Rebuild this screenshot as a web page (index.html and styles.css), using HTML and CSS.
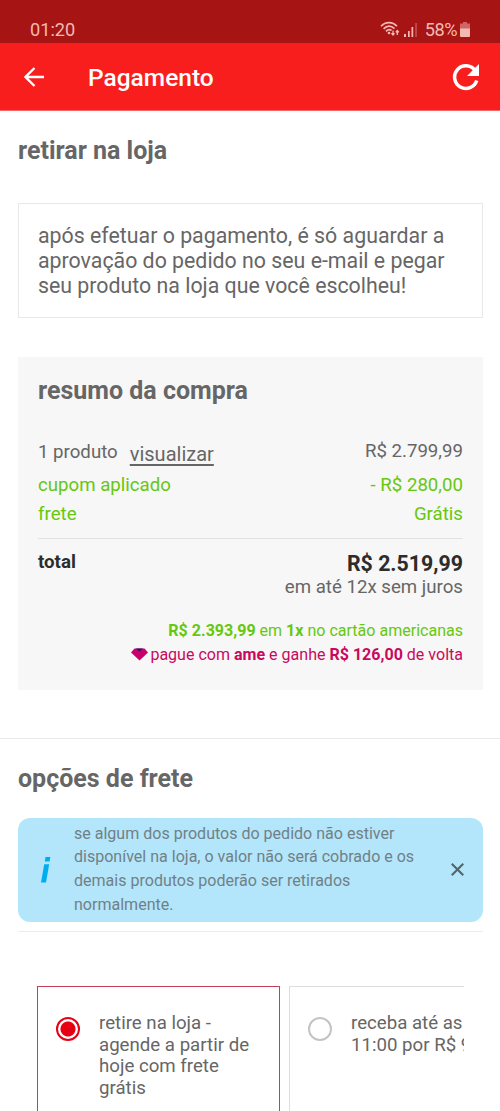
FILE: index.html
```html
<!DOCTYPE html>
<html lang="pt-BR">
<head>
<meta charset="utf-8">
<title>Pagamento</title>
<link rel="stylesheet" href="styles.css">
</head>
<body>
<div class="status">
  <span class="clock">01:20</span>
  <div class="indicators">
    <svg class="wifi" width="20" height="16" viewBox="0 0 20 16" fill="none" stroke="currentColor" stroke-width="1.7">
      <path d="M1 5.2C5.5.3 12.500.3 17 5.200"/><path d="M3.600 7.800C7 4.200 11 4.200 14.500 7.600"/><path d="M6 10.400C8 8.300 10 8.300 11.500 9.500"/>
      <circle cx="9" cy="12" r="1.300" fill="currentColor" stroke="none"/>
      <path d="M13 9.500v4.300M11.500 12.300l1.500 1.700 1.500-1.700M17.300 14V9.500M15.800 11.200l1.500-1.700 1.500 1.700" stroke-width="1.300"/>
    </svg>
    <svg class="signal" width="14" height="15" viewBox="0 0 14 15" fill="currentColor">
      <path d="M0 12h2v3H0zM4 9h1.700v6H4zM7.500 5h1.700v10H7.500z"/><path d="M11.300 1h1.500v14h-1.500z" opacity=".4"/>
    </svg>
    <span class="percent">58%</span>
    <svg class="battery" width="10" height="15" viewBox="0 0 10 15" fill="currentColor">
      <path d="M3 0h4v1.500h3V7H0V1.500h3z" opacity=".5"/><path d="M0 6.500h10V14a1 1 0 0 1-1 1H1a1 1 0 0 1-1-1z"/>
    </svg>
  </div>
</div>
<header class="bar">
  <svg class="back" width="20" height="20" viewBox="0 0 20 20" fill="none" stroke="#fff" stroke-width="2.3"><path d="M20 10H2M10.500 1L1.500 10l9 9"/></svg>
  <h1 class="title">Pagamento</h1>
  <svg class="reload" width="28" height="28" viewBox="0 0 28 28"><path d="M23 7.400A11.300 11.300 0 1 0 24.700 17.500" fill="none" stroke="#fff" stroke-width="3.500"/><path d="M27 1v12H15z" fill="#fff"/></svg>
</header>
<main>
  <section class="pickup">
    <h2 class="heading">retirar na loja</h2>
    <p class="notice">após efetuar o pagamento, é só aguardar a<br>aprovação do pedido no seu e-mail e pegar<br>seu produto na loja que você escolheu!</p>
  </section>
  <section class="summary">
    <h2 class="heading">resumo da compra</h2>
    <div class="row products"><span>1 produto<a class="view">visualizar</a></span><span>R$ 2.799,99</span></div>
    <div class="row coupon"><span>cupom aplicado</span><span>- R$ 280,00</span></div>
    <div class="row shipping"><span>frete</span><span>Grátis</span></div>
    <div class="row total"><b>total</b><b class="amount">R$ 2.519,99</b></div>
    <p class="installments">em até 12x sem juros</p>
    <p class="offer card"><b>R$ 2.393,99</b> em <b>1x</b> no cartão americanas</p>
    <p class="offer ame"><svg class="gem" width="17" height="13" viewBox="0 0 17 13"><path d="M3.500.5h10L17 4.500l-8.500 8L0 4.500z" fill="#c9006b"/><path d="M5 .5h7L8.500 3.500z" fill="#26166b"/></svg>pague com <b>ame</b> e ganhe <b>R$ 126,00</b> de volta</p>
  </section>
  <section class="freight">
    <h2 class="heading">opções de frete</h2>
    <div class="info">
      <svg class="info-icon" width="10" height="26" viewBox="0 0 10 26" fill="#00aeef"><path d="M4.500 0h4.800l-.7 4.500H3.800zM3.200 7.300h5L5 25.500H0z"/></svg>
      <p class="info-text">se algum dos produtos do pedido não estiver<br>disponível na loja, o valor não será cobrado e os<br>demais produtos poderão ser retirados<br>normalmente.</p>
      <svg class="close" width="13" height="13" viewBox="0 0 12 12" fill="none" stroke="#53646c" stroke-width="1.900"><path d="M.7.7l10.600 10.600M11.300.7L.7 11.300"/></svg>
    </div>
    <div class="options">
      <div class="track">
        <div class="option selected"><span class="radio"></span><p>retire na loja -<br>agende a partir de<br>hoje com frete<br>grátis</p></div>
        <div class="option"><span class="radio"></span><p>receba até as<br>11:00 por R$ 9</p></div>
      </div>
    </div>
  </section>
</main>
</body>
</html>
```
FILE: styles.css
```css
* { box-sizing: border-box; }
body { margin: 0; height: 1111px; overflow: hidden; background: #fff; color: #666; font-family: Roboto, sans-serif; }
h1, h2, p { margin: 0; }
.status { height: 43px; padding: 17px 29px 0 30px; display: flex; justify-content: space-between; background: #a61414; color: #f5b9b3; font-size: 18.200px; line-height: 26px; }
.indicators { display: flex; align-items: flex-start; }
.wifi { margin: 4px 4px 0 0; }
.signal { margin: 5px 7px 0 0; }
.percent { letter-spacing: -.5px; }
.battery { margin: 5px 1px 0 3px; }
.bar { height: 68px; display: flex; align-items: center; padding: 0 20px 0 24px; background: #f91e1e; border-bottom: 1px solid #f66; }
.title { flex: 1; margin: 2px 0 0 44px; color: #fff; font-size: 24.500px; font-weight: 500; line-height: 28px; }
.heading { font-size: 25px; font-weight: 700; line-height: 30px; }
.pickup { padding: 25px 17px 0 18px; }
.notice { margin-top: 37px; height: 115px; padding: 19px; border: 1px solid #e8e8e8; font-size: 21.330px; line-height: 25px; }
.summary { margin: 39px 17px 0 18px; height: 333px; padding: 19px 20px 0; background: #f7f7f7; font-size: 18.670px; }
.row { display: flex; justify-content: space-between; line-height: 24px; }
.products { margin-top: 33px; height: 34px; }
.view { display: inline-block; margin-left: 12px; font-size: 20px; transform: translateY(3px); text-decoration: underline; text-underline-offset: 3px; }
.coupon, .shipping { color: #66c80e; }
.shipping { margin-top: 5px; padding-bottom: 12px; border-bottom: 1px solid #e2e2e2; }
.total { margin-top: 11px; color: #2c2c2c; }
.total .amount { font-size: 21.330px; line-height: 28px; }
.installments { margin-top: -3px; text-align: right; line-height: 24px; }
.offer { text-align: right; font-size: 16.050px; line-height: 24px; }
.card { margin-top: 20px; color: #66c80e; }
.ame { color: #c9085e; }
.gem { margin-right: 2px; vertical-align: -1px; }
.freight { margin-top: 48px; padding: 25px 17px 0 18px; border-top: 1px solid #eaeaea; }
.info { margin-top: 24px; height: 104px; display: flex; align-items: center; padding: 0 19px 0 23px; border-radius: 12px; background: #b3e6fa; color: #718087; }
.info-text { flex: 1; margin: -2px 0 0 23px; font-size: 16.050px; line-height: 23.700px; }
.close { margin-top: -2px; }
.options { margin-top: 9px; padding: 54px 19px 0 18px; border-top: 1px solid #e8edf0; }
.track { display: flex; gap: 9px; height: 130px; overflow: hidden; padding-left: 1px; }
.option { flex: 0 0 243px; height: 150px; padding: 26px 18px; display: flex; border: 1px solid #ddd; white-space: nowrap; font-size: 18.670px; line-height: 21.700px; }
.option.selected { border: 1px solid #c2405a; }
.radio { flex: none; width: 24px; height: 24px; margin: 4px 19px 0 0; border: 2px solid #c4c4c4; border-radius: 50%; }
.selected .radio { border: 2.500px solid #e60014; background: radial-gradient(circle, #e60014 7px, #fff 8px); }
```
